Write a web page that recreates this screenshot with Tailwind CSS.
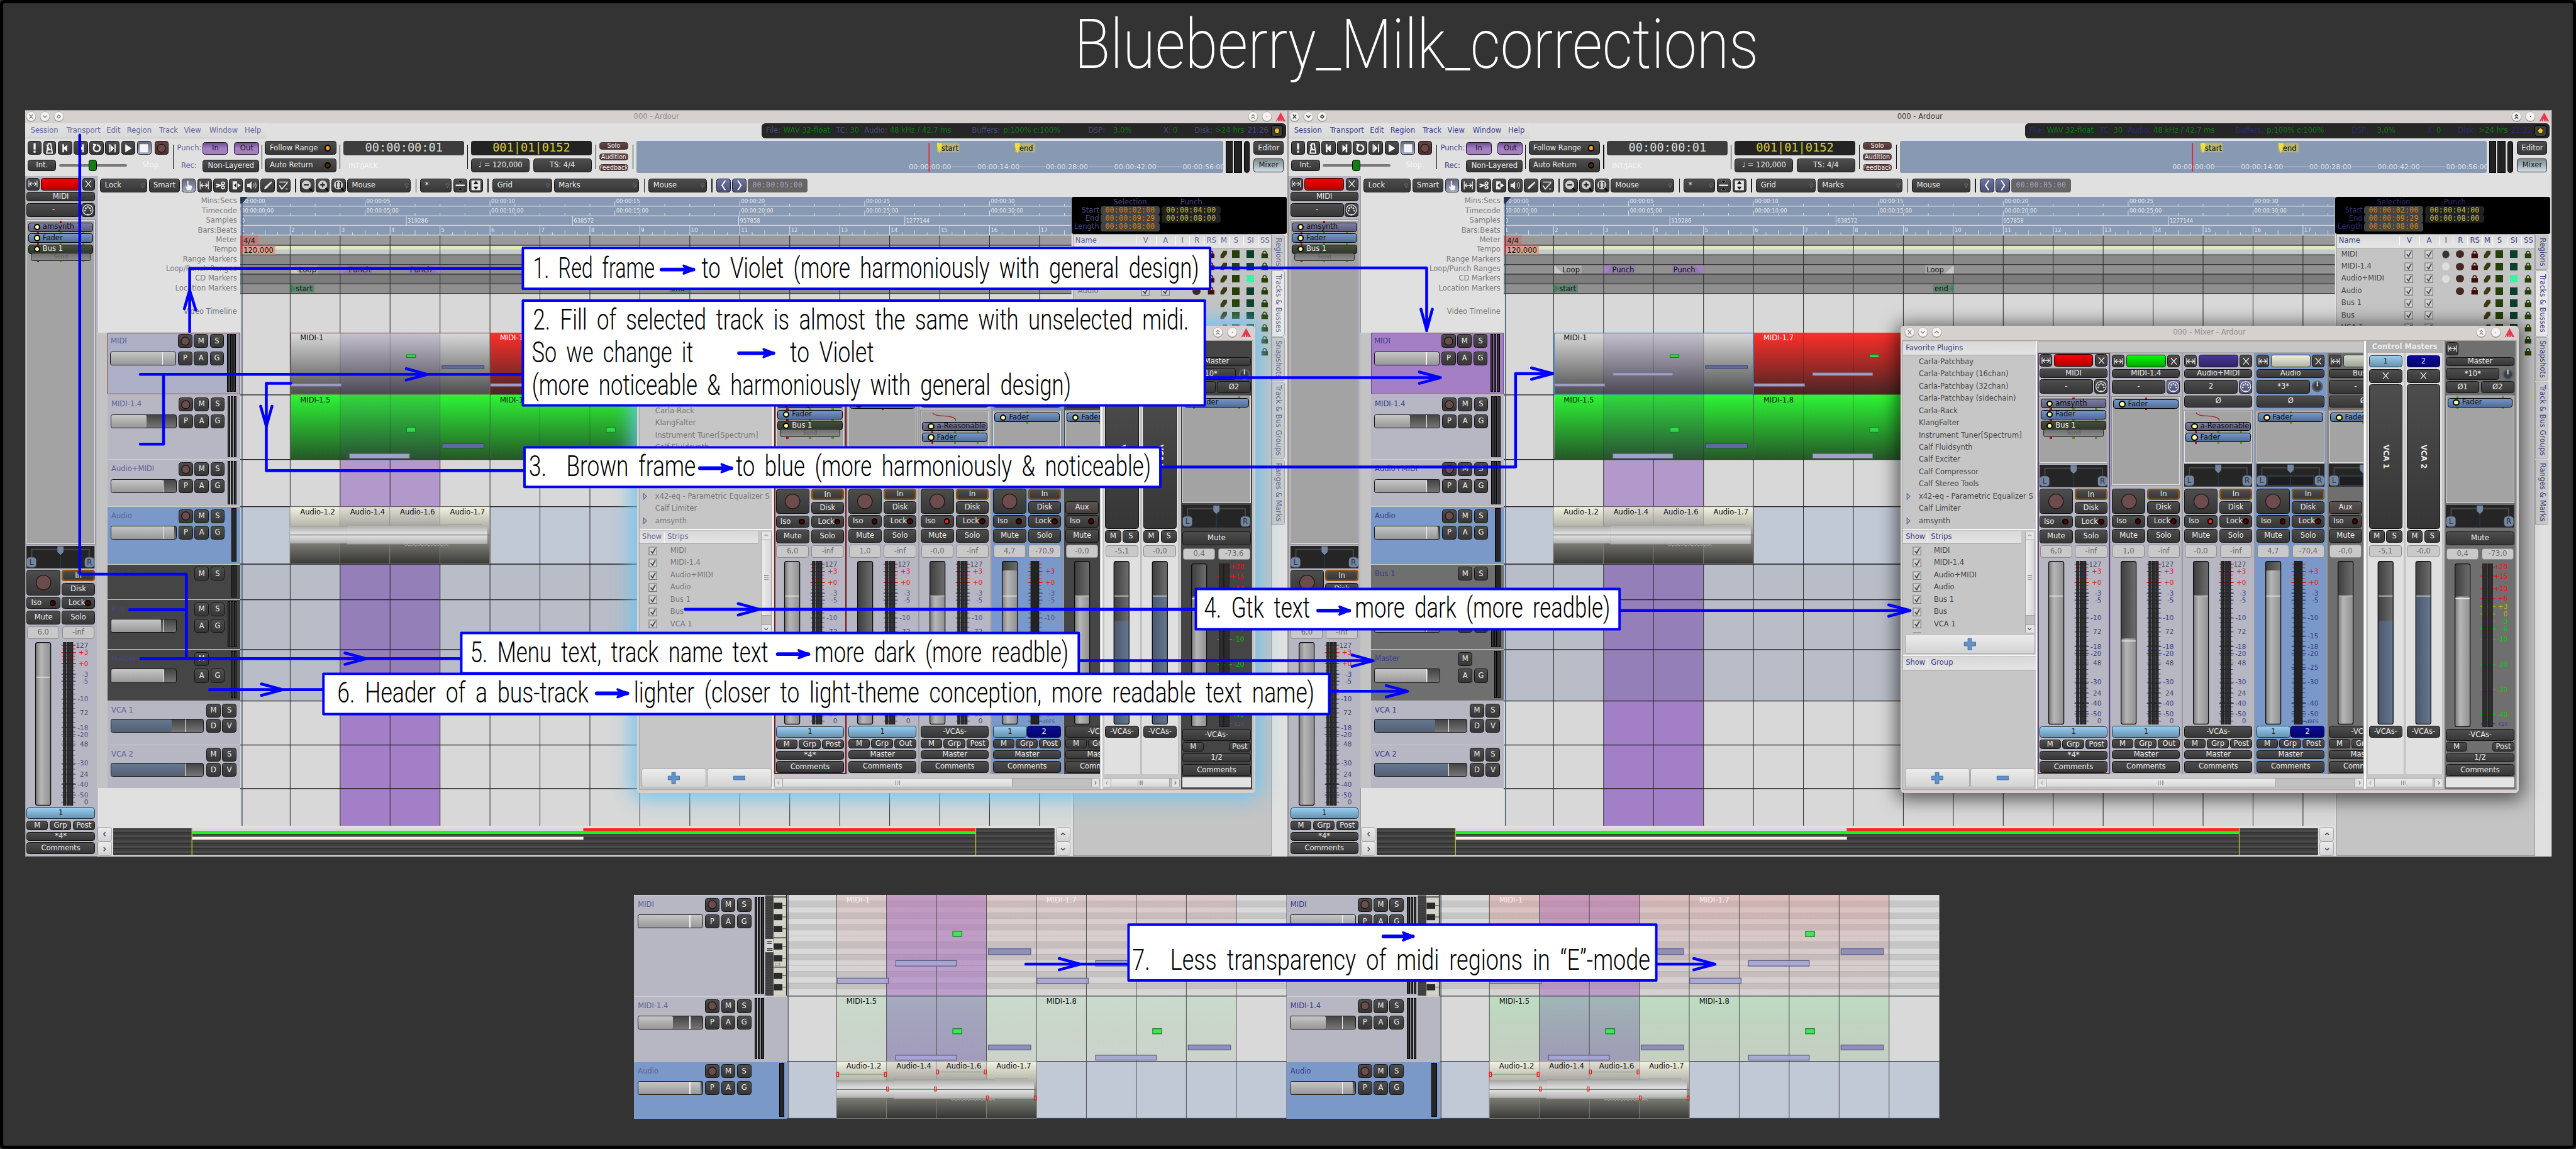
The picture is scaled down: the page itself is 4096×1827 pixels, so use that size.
<!DOCTYPE html>
<html lang="en">
<head>
<meta charset="utf-8">
<title>Blueberry_Milk_corrections</title>
<script src="https://cdn.jsdelivr.net/npm/@tailwindcss/browser@4"></script>
</head>
<body class="h-screen w-screen overflow-hidden bg-[#333333]">
<div id="root" class="relative h-[2817px] w-[6316px] overflow-hidden bg-[#333333] font-['DejaVu_Sans',sans-serif] text-[17.8px] leading-none whitespace-nowrap [zoom:0.64851]"></div>
<script>
// ---------- flow helpers: items are [start, end, html] along one axis ----------
const H = (o, items) => '<div class="flex h-full w-full">' + items.map(([a, b, h]) => {
  const m = a - o; o = b;
  return `<div class="flex shrink-0" style="margin-left:${m}px;width:${b - a}px">${h}</div>`;
}).join('') + '</div>';
const V = (o, items) => '<div class="flex h-full w-full flex-col">' + items.map(([a, b, h]) => {
  const m = a - o; o = b;
  return `<div class="flex shrink-0" style="margin-top:${m}px;height:${b - a}px">${h}</div>`;
}).join('') + '</div>';

const TONE = {
  dark: 'border-[#141414] bg-linear-to-b from-[#4d4d4d] to-[#363636] text-[#ececec]',
  purple: 'border-[#1c1526] bg-linear-to-b from-[#6b4f8a] via-[#a47fc6] to-[#a47fc6] text-[#141414]',
  lav: 'border-[#20222c] bg-linear-to-b from-[#64687c] to-[#a3a8c4] text-white',
  rec: 'border-[#151010] bg-linear-to-b from-[#664444] to-[#4c3030] text-white',
  brown: 'border-[#4c3535] bg-linear-to-b from-[#664848] to-[#4c3333] text-[#eeeeee] text-[15px]',
  mixer: 'border-[#222222] bg-linear-to-b from-[#7d8a90] to-[#cfdfe8] text-[#1a1a1a]',
  vca1: 'border-[#22333e] bg-linear-to-b from-[#97cef3] to-[#6891ae] text-[#1a1a1a]',
  navy: 'border-[#0a0a30] bg-linear-to-b from-[#0a0a9c] to-[#050568] text-[#e6e6e6]',
  input: 'border-[#7a4a08] bg-linear-to-b from-[#4d4d4d] to-[#363636] text-[#ececec] ring-2 ring-inset ring-[#9a5f08]',
  aux: 'border-[#141414] bg-linear-to-b from-[#5c5352] to-[#453f3e] text-[#ececec]',
  nudge: 'border-[#15151f] bg-linear-to-b from-[#6e74a2] to-[#4b4f72] text-white',
  red: 'border-[#200] bg-linear-to-b from-[#ff0000] to-[#b00000]',
  green: 'border-[#020] bg-linear-to-b from-[#00ff00] to-[#00a800]',
  violet: 'border-[#102] bg-linear-to-b from-[#4a3796] to-[#332568]',
  cream: 'border-[#333] bg-linear-to-b from-[#f0efe0] to-[#b4b3a4]',
  sage: 'border-[#333] bg-linear-to-b from-[#d3dccb] to-[#9da696]',
};
const btn = (l, t = 'dark', x = '') => `<div class="flex h-full w-full items-center justify-center overflow-hidden rounded-[7px] border-2 ${TONE[t]} ${x}">${l}</div>`;
const sep = '<div class="my-[9px] h-[60px] w-full bg-[#111111]"></div>';
const txt = (l, c) => `<div class="flex h-full w-full items-center ${c}">${l}</div>`;
const svg = (w, h, body, x = '') => `<svg class="shrink-0 ${x}" width="${w}" height="${h}" viewBox="0 0 ${w} ${h}">${body}</svg>`;
const ic = b => svg(30, 30, b);
const chev = (d, c = '#50526c', z = 16) => `<svg class="shrink-0" width="${z}" height="${z}" viewBox="0 0 16 16"><path d="${{ l: 'M10 3L6 8l4 5', r: 'M6 3l4 5-4 5', u: 'M3 10l5-4 5 4', d: 'M3 6l5 4 5-4' }[d]}" fill="none" stroke="${c}" stroke-width="2.600"/></svg>`;

const I = {
  panic: ic('<path d="M13 3h5v15h-5zM13 21h5v5h-5z" fill="#f4f4f4"/>'),
  metro: ic('<path d="M8 27 12 4h6l4 23zM11 19h9M15 19 8 6" fill="none" stroke="#f4f4f4" stroke-width="3"/>'),
  start: ic('<path d="M8 5h4v8l8-7v18l-8-7v8H8z" fill="#f4f4f4"/>'),
  end: ic('<path d="M22 5h-4v8l-8-7v18l8-7v8h4z" fill="#f4f4f4"/>'),
  loop: ic('<path d="M10 9a8 8 0 1 0 6-2" fill="none" stroke="#f4f4f4" stroke-width="4"/><path d="M5 4l10 1-5 9z" fill="#f4f4f4"/>'),
  range: ic('<path d="M7 5h3v20H7zM20 5h3v20h-3zM11 6l8 9-8 9z" fill="#f4f4f4"/>'),
  play: ic('<path d="M8 5l16 10L8 25z" fill="#f4f4f4"/>'),
  stop: ic('<path d="M5 5h20v20H5z" fill="#f4f4f4"/>'),
  rec: ic('<circle cx="15" cy="15" r="10" fill="#704a4a" stroke="#241616" stroke-width="2"/>'),
  hand: ic('<path d="M12 4h3v10l8 2v6l-2 5h-8l-6-8 2-2 3 3z" fill="#f4f4f4"/>'),
  span: ic('<path d="M5 5v20M25 5v20M7 15h16M12 10l-5 5 5 5M18 10l5 5-5 5" fill="none" stroke="#e8e8e8" stroke-width="2"/>'),
  cut: ic('<path d="M4 12l13 4M4 19l13-5" stroke="#f4f4f4" stroke-width="3"/><circle cx="21" cy="10" r="3.500" fill="none" stroke="#f4f4f4" stroke-width="2.500"/><circle cx="21" cy="20" r="3.500" fill="none" stroke="#f4f4f4" stroke-width="2.500"/>'),
  stretch: ic('<path d="M6 5h11v20H6z" fill="#e8e8e8"/><path d="M15 10l-6 5 6 5z" fill="#222"/><path d="M18 10l8 5-8 5z" fill="#f4f4f4"/>'),
  audition: ic('<path d="M3 11h5l6-6v20l-6-6H3z" fill="#e8e8e8"/><path d="M18 10q4 5 0 10M22 7q6 8 0 16" fill="none" stroke="#bbb" stroke-width="2"/>'),
  draw: ic('<path d="M6 25l2-6L24 5l1 4L11 23z" fill="#e8e8e8"/>'),
  edit: ic('<path d="M5 7h20M5 15l6 9L25 8M20 24h5" fill="none" stroke="#e8e8e8" stroke-width="2.500"/>'),
  zout: ic('<circle cx="14" cy="14" r="11" fill="#cfcfcf"/><path d="M8 14h12" stroke="#222" stroke-width="3"/><path d="M21 22l6 6" stroke="#000" stroke-width="4"/>'),
  zin: ic('<circle cx="14" cy="14" r="11" fill="#cfcfcf"/><path d="M8 14h12M14 8v12" stroke="#222" stroke-width="3"/><path d="M21 22l6 6" stroke="#000" stroke-width="4"/>'),
  zfit: ic('<circle cx="14" cy="14" r="11" fill="#cfcfcf"/><path d="M12 8H9v12h3M16 8h3v12h-3" fill="none" stroke="#222" stroke-width="2.500"/><path d="M21 22l6 6" stroke="#000" stroke-width="4"/>'),
  shrink: ic('<path d="M9 3h12l-6 8zM9 27h12l-6-8z" fill="#0c0c0c" stroke="#999" stroke-width="1"/><path d="M4 13h22v4H4z" fill="#e8e8e8"/>'),
  expand: ic('<path d="M4 3h22v24H4z" fill="#e8e8e8"/><path d="M9 12h12l-6-8zM9 18h12l-6 8z" fill="#111"/>'),
  lt: ic('<path d="M19 3l-8 12 8 12" fill="none" stroke="#fff" stroke-width="3"/>'),
  gt: ic('<path d="M11 3l8 12-8 12" fill="none" stroke="#fff" stroke-width="3"/>'),
  width: svg(26, 26, '<path d="M3 5v16M23 5v16M5 13h16M10 8l-5 5 5 5M16 8l5 5-5 5" fill="none" stroke="#e8e8e8" stroke-width="1.800"/>'),
  x: svg(26, 26, '<path d="M6 5l14 16M20 5L6 21" stroke="#e8e8e8" stroke-width="2"/>'),
  din: svg(30, 30, '<circle cx="15" cy="15" r="12.500" fill="none" stroke="#e8e8e8" stroke-width="2"/><g fill="#e8e8e8"><circle cx="8" cy="17" r="2"/><circle cx="10" cy="11" r="2"/><circle cx="15" cy="8" r="2"/><circle cx="20" cy="11" r="2"/><circle cx="22" cy="17" r="2"/><path d="M12 25h6v3h-6z"/></g>'),
};
const peak = '<path d="M13 1L1 23h3l2-5 1 5h3l1-7 2 7h3l1-5 2 5h6z" fill="#e8384f"/>';
const bub = (g, c) => svg(26, 26, `<circle cx="13" cy="14" r="12" fill="#8d8986"/><circle cx="13" cy="12.500" r="11.500" fill="#f4f3f1" stroke="#a9a5a2"/><path d="${g}" fill="none" stroke="${c}" stroke-width="2.200"/>`);
const G = { x: 'M9 8l8 10M17 8L9 18', v: 'M8 10l5 5 5-5', o: 'M13 9l4 4-4 4-4-4z', u: 'M8 15l5-5 5 5', uu: 'M9 12l4-4 4 4M9 18l4-4 4 4', d: 'M12 13h2' };

const T = [
  { menu: 'text-[#63669c]', glyph: '#8a8785', title: 'text-[#918e8c]', name: 'text-[#5d6396]', bus: 'bg-[#454545]', busName: 'text-[#46487a]',
    gtk: 'text-[#787878]', sel: 'bg-[#adafc6] border-[#7b1c1c]', msel: 'border-[#7b1c1c]', stat: 'text-[#484b7d]', selStroke: '#8a6a6a', scale: '#4f5488',
    glow: 'shadow-[0_0_50px_12px_rgba(105,195,240,0.95)]', clock: '21:26', tab: 'text-[#5d6396]', db: '-70,9', mdb: '-73,6' },
  { menu: 'text-[#3b4187]', glyph: '#2e2e2e', title: 'text-[#3a3836]', name: 'text-[#363c88]', bus: 'bg-[#6f6f6f]', busName: 'text-[#363c88]',
    gtk: 'text-[#474747]', sel: 'bg-[#a47fc6] border-[#694a92]', msel: 'border-[#5f4585]', stat: 'text-[#2a2f6e]', selStroke: '#3a8ee0', scale: '#363c88',
    glow: 'shadow-[0_6px_44px_8px_rgba(0,0,0,0.6)]', clock: '21:22', tab: 'text-[#363c88]', db: '-70,4', mdb: '-73,0' },
];

// ---------- mixer strips ----------
const led = '<span class="ml-[12px] mr-[6px] h-[16px] w-[16px] shrink-0 rounded-full border-4 border-black bg-[#f3ffa0]"></span>';
const PROC = {
  plug: 'bg-linear-to-b from-[#7d7ea3] to-[#5c5d78] text-[#0d0d0d]',
  fader: 'bg-linear-to-b from-[#7597c8] to-[#516d97] text-[#0d0d0d]',
  send: 'bg-linear-to-b from-[#454f3c] to-[#30372a] text-[#eeeeee]',
};
const proc = ([n, k]) => `<div class="flex h-[23px] shrink-0 items-center overflow-hidden rounded-[7px] border-2 border-black ${PROC[k]}">${led}${n}</div>`;
const sendBar = '<div class="mx-[6px] -mt-[3px] flex h-[20px] shrink-0 items-center justify-center rounded-[5px] border-2 border-[#222] bg-linear-to-b from-[#6e6e6e] to-[#8d8d8d] text-[14px] text-[#5a5a5a]">Send</div>';
const tick = c => `<span class="w-[5px] ${c}"></span>`;
const ticks = k => `<div class="flex h-[4px] shrink-0 justify-between px-[22px]">${k === 'all' ? tick('bg-[#b01010]') + tick('bg-[#4e9a06]') + tick('bg-[#4e9a06]') : k === 'mid' ? tick('') + tick('bg-[#4e9a06]') + tick('') : k === 'midr' ? tick('') + tick('bg-[#b01010]') + tick('') : k === 'two' ? tick('bg-[#4e9a06]') + tick('bg-[#4e9a06]') : ''}</div>`;
const panner = b => svg(167, 55, `<path d="M0 0h167v55H0z" fill="#252525"/><path d="M13 30V9h141v21" fill="none" stroke="#484848" stroke-width="3"/>${b ? '<path d="M26 29h115v24H26z" fill="#1e1e1e" stroke="#3d4c63" stroke-width="2"/>' : ''}<path d="M83.500 10v45" stroke="#2b3a4e" stroke-width="2"/><path d="M76 1h15v14l-7.500 7-7.500-7z" fill="#73859f"/><rect x="1" y="28" width="23" height="25" rx="7" fill="#73859f"/><rect x="143" y="28" width="23" height="25" rx="7" fill="#73859f"/><text x="12.500" y="47" font-size="18" text-anchor="middle" fill="#2a3340">L</text><text x="154.500" y="47" font-size="18" text-anchor="middle" fill="#2a3340">R</text>`);

const MIDI = [['127', 8, 'k'], ['+3', 26, 'r'], ['+0', 53, 'r'], ['-3', 79, 'b'], ['-5', 96, 'b'], ['-10', 140, 'b'], ['72', 174, 'k'], ['-18', 210, 'b'], ['-20', 227, 'b'], ['48', 250, 'k'], ['-30', 297, 'b'], ['24', 325, 'k'], ['-40', 349, 'b'], ['-50', 375, 'b'], ['0', 393, 'k']];
const AUDIO = [['+3', 26, 'r'], ['+0', 53, 'r'], ['-3', 79, 'b'], ['-5', 96, 'b'], ['-10', 140, 'b'], ['-15', 184, 'b'], ['-18', 210, 'b'], ['-20', 227, 'b'], ['-25', 262, 'b'], ['-30', 297, 'b'], ['-40', 349, 'b'], ['-50', 375, 'b'], ['dBFS', 393, 's']];
const K20 = [['+20', 9, 'r'], ['+15', 31, 'r'], ['+10', 62, 'r'], ['+6', 86, 'r'], ['+3', 105, 'y'], ['0', 124, 'y'], ['-3', 142, 'g'], ['-6', 160, 'g'], ['-10', 186, 'g'], ['-20', 248, 'g'], ['-30', 309, 'g'], ['-40', 370, 'g'], ['K20', 393, 's']];
const GRADS = '<defs><linearGradient id="fg"><stop offset="0" stop-color="#7c7c7c"/><stop offset=".35" stop-color="#b6b6b6"/><stop offset="1" stop-color="#8f8f8f"/></linearGradient><linearGradient id="fb"><stop offset="0" stop-color="#3e3e3e"/><stop offset="1" stop-color="#6e6e6e"/></linearGradient><linearGradient id="fv"><stop offset="0" stop-color="#4a586c"/><stop offset="1" stop-color="#66788f"/></linearGradient></defs>';
const faderBody = (x, fill, line, g) => `<rect x="${x}" y="1" width="37" height="399" rx="5" fill="url(#fb)"/><rect x="${x}" y="${fill + 1}" width="37" height="${399 - fill}" rx="5" fill="url(#${g})"/><path d="M${x} ${line}h37" stroke="#f2f2f2" stroke-width="2"/><rect x="${x}" y="1" width="37" height="399" rx="5" fill="none" stroke="#0c0c0c" stroke-width="2"/>`;
const meterBody = (x, n) => n === 1 ? `<path d="M${x} 0h20v401H${x}z" fill="#232323" stroke="#111"/>` : Array.from({ length: n }, (_, i) => `<rect x="${x + i * (n === 2 ? 13 : 8.500)}" y="0" width="${n === 2 ? 11 : 6.500}" height="401" fill="#2c2c2c" stroke="#0a0a0a"/>`).join('');
const scaleBody = (t, scale) => {
  const C = { r: '#ee1111', b: t.scale, k: '#444a66', g: '#00d200', y: '#c4b400', s: t.scale };
  let s = '';
  for (let y = 8; y < 395; y += scale === K20 ? 1000 : y < 100 ? 8.800 : 11.500) s += `<path d="M86 ${y}h32" stroke="${y < 60 ? C.r : C.b}" stroke-width="1.500"/>`;
  scale.forEach(([l, y, c]) => { s += `<path d="M84 ${y}h36" stroke="${C[c]}" stroke-width="${c === 'k' ? 1 : 2}"/><text x="150" y="${y + 5.500}" font-size="${c === 's' ? 12 : 16}" text-anchor="end" fill="${C[c]}">${l}</text>`; });
  return s;
};
const faderSec = (t, s) => svg(167, 401, GRADS + faderBody(21, s.fill, s.line, 'fg') + scaleBody(t, s.scale) + meterBody(s.meters === 1 ? 91 : 89, s.meters), 'ml-px');

const gainBox = v => `<div class="flex h-full w-full items-center justify-center rounded-[6px] border-2 border-[#8c8c8c] bg-[#c9c9c9] text-[#6b6b6b]">${v}</div>`;
const dot = on => `<span class="h-[15px] w-[15px] rounded-full border-4 border-black ${on ? 'bg-[#ff2020]' : 'bg-[#5a0000]'}"></span>`;
const knob = svg(30, 32, '<circle cx="15" cy="16" r="14" fill="#5a6068"/><circle cx="15" cy="16" r="10" fill="#3a3f47"/><path d="M15 16V4" stroke="#ddd" stroke-width="3"/>');
const row = (h, mt, items) => `<div class="shrink-0" style="height:${h}px;margin-top:${mt}px">${H(0, items)}</div>`;

function strip(t, s) {
  const B = s.bg;
  return `<div class="flex h-full w-[177.300px] shrink-0 flex-col ${B} ${s.sel ? 'border-4 ' + t.msel : 'border-r-2 border-l-2 border-[#9a9a9a]'}"><div class="flex h-full w-[167px] flex-col ${s.sel ? 'ml-px' : 'ml-[3px] pt-[4px] pb-[4px]'}">`
    + row(31, 0, [[0, 31, btn(I.width)], [35, 132, btn('', s.color)], [136, 167, btn(I.x)]])
    + row(22.500, 4, [[0, 167, btn(s.name)]])
    + row(34, 4.500, [[0, 131, btn(s.input)], [134, 167, s.knob ? knob : btn(I.din, s.din || 'dark')]])
    + (s.phase ? row(29, 4, [[0, 167, btn('Ø')]]) : '')
    + `<div class="mt-[8px] flex min-h-0 flex-1 flex-col border-2 border-[#e2e2e2] bg-[#a3a3a3] px-[2px] outline outline-[#8a8a8a]">${s.route ? svg(160, 26, '<path d="M26 3c3 14 56 2 57 20" fill="none" stroke="#aa2222" stroke-width="2"/>') : ''}${s.procs.map((p, i) => (i ? ticks(s.tk) : `<div class="${s.route ? 'hidden' : ''}">${ticks(s.t0 || s.tk)}</div>`) + proc(p)).join('')}${s.send ? sendBar : ''}${ticks(s.tk)}</div>`
    + (s.nopan ? '<div class="h-[8px] shrink-0"></div>' : `<div class="mt-[4px] h-[55px] shrink-0">${panner(s.box)}</div><div class="h-[4px] shrink-0"></div>`)
    + row(62, 0, [[0, 82, s.aux ? V(0, [[32, 62, btn('Aux', 'aux')]]) : btn(svg(50, 50, '<circle cx="25" cy="25" r="18" fill="#6c4c4c" stroke="#241616" stroke-width="2"/>'))], [86, 167, s.aux ? '' : V(0, [[0, 28, btn('In', 'input')], [32, 62, btn('Disk')]])]])
    + row(29.500, 4, [[0, 82, btn(`Iso <span class="w-[20px]"></span>${dot(s.iso)}`)], [86, 167, btn(`<span class="pl-[8px]">Lock</span>${dot()}`)]])
    + row(34, 4, [[0, 82, btn('Mute')], [86, 167, btn('Solo')]])
    + row(31, 5, [[1, 80, gainBox(s.gain[0])], [87, 166, gainBox(s.gain[1])]])
    + `<div class="mt-[8px] h-[401px] shrink-0">${faderSec(t, s)}</div>`
    + row(28.500, 4, s.vca === 2 ? [[0, 83, btn('1', 'vca1')], [83, 167, btn('2', 'navy')]] : [[0, 167, btn(s.vca === 1 ? '1' : '-VCAs-', s.vca === 1 ? 'vca1' : 'dark')]])
    + row(23, 4, [[0, 52, btn('M')], [56, 109, btn('Grp')], [113, 167, btn(s.post || 'Post')]])
    + row(22, 4, [[0, 167, btn(s.out)]])
    + row(29, 4, [[0, 167, btn('Comments')]])
    + '</div></div>';
}
const LAV = 'bg-[#b7b6c3]';
const midiStrip = { bg: LAV, color: 'red', name: 'MIDI', input: '-', tk: 'all', t0: 'midr', procs: [['amsynth', 'plug'], ['Fader', 'fader'], ['Bus 1', 'send']], send: 1, gain: ['6,0', '-inf'], fill: 0, line: 86, vca: 1, out: '*4*', scale: MIDI, meters: 3 };

function masterStrip(t) {
  return `<div class="ml-[4px] flex h-full w-[173px] shrink-0 flex-col ${t.bus} pl-[3px]">`
    + row(31, 4, [[0, 31, btn(I.width)]])
    + row(22.500, 5, [[0, 167, btn('Master')]])
    + row(29, 4, [[0, 131, btn('*10*')], [136, 167, knob]])
    + row(29, 4, [[0, 81, btn('Ø1')], [85, 167, btn('Ø2')]])
    + `<div class="mt-[6px] flex w-[167px] min-h-0 flex-1 flex-col border-2 border-[#e2e2e2] bg-[#a3a3a3] px-[2px]">${ticks('two')}${proc(['Fader', 'fader'])}${ticks('two')}</div>`
    + `<div class="mt-[5px] h-[55px] shrink-0">${panner(0)}</div>`
    + row(34, 10, [[0, 167, btn('Mute')]])
    + row(29, 7, [[1, 80, gainBox('0,4')], [87, 166, gainBox(t.mdb)]])
    + `<div class="mt-[9px] h-[401px] shrink-0">${faderSec(t, { fill: 80, line: 86, scale: K20, meters: 2 })}</div>`
    + row(29, 4, [[0, 167, btn('-VCAs-')]])
    + row(23, 4, [[0, 52, btn('M')], [114, 167, btn('Post')]])
    + row(22.500, 4, [[0, 167, btn('1/2')]])
    + row(29, 4, [[0, 167, btn('Comments')]])
    + '<div class="mt-[4px] mb-[5px] h-[24px] w-[167px] shrink-0 bg-[#e3e3e3]"></div></div>';
}
function vcaStrip(n, fill, gain) {
  return `<div class="flex h-full w-[92px] shrink-0 flex-col border-x-2 border-[#bdbdbd] bg-[#e0e0e0] px-[3px]">`
    + row(29, 6, [[0, 82, btn(n, n === 1 ? 'vca1' : 'navy')]])
    + row(34, 4, [[0, 82, btn(I.x)]])
    + row(354, 4, [[0, 82, btn(`<span class="font-bold [writing-mode:vertical-rl]">VCA ${n}</span>`)]])
    + row(29.500, 4, [[0, 39, btn('M')], [43, 82, btn('S')]])
    + row(30, 7, [[1, 81, gainBox(gain)]])
    + `<div class="mt-[8px] h-[401px] shrink-0">${svg(82, 401, faderBody(22, fill, 86, 'fv'))}</div>`
    + row(29, 4, [[0, 82, btn('-VCAs-')]])
    + '</div>';
}
const chk = '<svg class="shrink-0" width="22" height="22" viewBox="0 0 22 22"><path d="M1.500 1.500h19v19h-19z" fill="#d2d2d2" stroke="#7a7a7a" stroke-width="1.800"/><path d="M6 11l4.500 5.500L17 4" fill="none" stroke="#444" stroke-width="2.800"/></svg>';
const plus = svg(32, 32, '<path d="M11 2h9v9h10v9H20v10h-9V20H2v-9h9z" fill="#6493c8" stroke="#3f6ea6" stroke-width="1.500"/>');
const minus = svg(32, 32, '<path d="M2 11h28v9H2z" fill="#6493c8" stroke="#3f6ea6" stroke-width="1.500"/>');
const gbtn = (l, x = '') => `<div class="flex h-full w-full items-center justify-center rounded-[5px] border-2 border-[#a8a8a8] bg-linear-to-b from-[#ececec] to-[#d3d3d3] ${x}">${l}</div>`;
const head = (l, t) => `<div class="flex h-full w-full items-center border-b-2 border-[#a0a0a0] bg-linear-to-b from-[#d8d8d8] to-[#e4e4e4] pl-[6px] ${t.menu}">${l}</div>`;

function mixer(t, idx) {
  const fav = ['Carla-Patchbay', 'Carla-Patchbay (16chan)', 'Carla-Patchbay (32chan)', 'Carla-Patchbay (sidechain)', 'Carla-Rack', 'KlangFalter', 'Instrument Tuner[Spectrum]', 'Calf Fluidsynth', 'Calf Exciter', 'Calf Compressor', 'Calf Stereo Tools', '>x42-eq - Parametric Equalizer S', 'Calf Limiter', '>amsynth'];
  const tri = `<svg class="absolute left-[8px]" width="12" height="16" viewBox="0 0 12 16"><path d="M2 1l7 7-7 7z" fill="none" stroke="#63669c" stroke-width="2"/></svg>`;
  const left = V(566, [
    [568, 601, head('Favorite Plugins', t)],
    [603, 1025, `<div class="w-full overflow-hidden ${t.gtk}">${fav.map(f => `<div class="relative flex h-[30px] items-center pl-[38px]">${f[0] === '>' ? tri + f.slice(1) : f}</div>`).join('')}</div>`],
    [1028, 1031, '<div class="w-full bg-[#f5f5f5]"></div>'],
    [1032, 1284, H(0, [
      [0, 290, V(0, [[0, 33, head('Show <span class="mx-[6px] h-[26px] w-[2px] bg-white"></span>Strips', t)], [34, 252, `<div class="w-full overflow-hidden ${t.gtk}">${['MIDI', 'MIDI-1.4', 'Audio+MIDI', 'Audio', 'Bus 1', 'Bus', 'VCA 1', ''].map(f => `<div class="flex h-[30px] items-center gap-[31px] pl-[22px]">${chk}${f}</div>`).join('')}</div>`]])],
      [298, 323, `<div class="flex w-full flex-col rounded-[4px] border-2 border-[#a3a3a3] bg-[#bfbfbf]"><div class="flex h-[20px] items-center justify-center bg-[#e4e4e4]">${chev('u', '#a0a0a0', 13)}</div><div class="flex h-[186px] flex-col items-center justify-center gap-[3px] border-y-2 border-[#a3a3a3] bg-linear-to-r from-[#eeeeee] to-[#d6d6d6]"><span class="h-[2px] w-[11px] bg-[#9a9a9a]"></span><span class="h-[2px] w-[11px] bg-[#9a9a9a]"></span><span class="h-[2px] w-[11px] bg-[#9a9a9a]"></span></div><div class="mt-auto flex h-[20px] items-center justify-center border-t-2 border-[#a3a3a3] bg-[#e4e4e4]">${chev('d', '#5d5f86', 13)}</div></div>`]])],
    [1285, 1334, H(0, [[4, 323, gbtn(plus)]])],
    [1336, 1339, '<div class="w-full bg-[#f5f5f5]"></div>'],
    [1340, 1374, head('Show <span class="mx-[6px] h-[26px] w-[2px] bg-white"></span>Group', t)],
    [1615, 1661, H(0, [[4, 163, gbtn(plus)], [164, 323, gbtn(minus)]])],
  ]);
  const strips = [
    { ...midiStrip, sel: 1 },
    { bg: LAV, color: 'green', name: 'MIDI-1.4', input: '-', din: 'nudge', tk: 'midr', procs: [['Fader', 'fader']], nopan: 1, gain: ['1,0', '-inf'], fill: 189, line: 196, vca: 1, post: 'Out', out: 'Master', scale: MIDI, meters: 3 },
    { bg: LAV, color: 'violet', name: 'Audio+MIDI', input: '2', din: 'nudge', phase: 1, route: 1, tk: 'all', procs: [['a-Reasonable', 'plug'], ['Fader', 'fader']], iso: 1, gain: ['-0,0', '-inf'], fill: 86, line: 86, out: 'Master', scale: MIDI, meters: 3 },
    { bg: 'bg-[#7a98c8]', color: 'cream', name: 'Audio', input: '*3*', knob: 1, phase: 1, tk: 'mid', procs: [['Fader', 'fader']], box: 1, gain: ['4,7', t.db], fill: 22, line: 86, vca: 2, out: 'Master', scale: AUDIO, meters: 1 },
    { bg: t.bus, color: 'sage', name: 'Bus 1', input: '-', knob: 1, phase: 1, tk: 'mid', procs: [['Fader', 'fader']], box: 1, aux: 1, gain: ['-0,0', '-inf'], fill: 86, line: 86, out: 'Master', scale: AUDIO, meters: 1 },
  ];
  const grip = '<span class="h-[11px] w-[2px] bg-[#9a9a9a]"></span>';
  const sb = (w, th) => `<div class="flex h-full w-full rounded-[4px] border-2 border-[#a3a3a3] bg-[#c0c0c0]"><div class="flex w-[18px] items-center justify-center bg-[#e4e4e4]">${chev('l', '#a0a0a0', 12)}</div><div class="flex items-center justify-center gap-[3px] border-x-2 border-[#a3a3a3] bg-linear-to-b from-[#eeeeee] to-[#d6d6d6]" style="width:${th}px">${grip}${grip}${grip}</div><div class="ml-auto flex w-[20px] items-center justify-center border-l-2 border-[#a3a3a3] bg-[#e4e4e4]">${chev('r', '#6a6c90', 12)}</div></div>`;
  return `<section class="absolute top-[528px] left-[1501px] flex h-[1146px] w-[1516px] flex-col rounded-[9px] bg-[#d6d1ce] ${t.glow}">
    <header class="h-[36px] shrink-0">${H(0, [[9, 35, V(0, [[4, 30, bub(G.x, '#8a8785')]])], [42, 68, V(0, [[4, 30, bub(G.v, '#8a8785')]])], [75, 101, V(0, [[4, 30, bub(G.u, '#8a8785')]])], [600, 914, txt('000 - Mixer - Ardour', 'justify-center text-[#918e8c]')], [1411, 1437, V(0, [[4, 30, bub(G.uu, '#8a8785')]])], [1446, 1472, V(0, [[4, 30, bub(G.d, '#8a8785')]])], [1480, 1507, V(0, [[5, 30, svg(27, 25, peak)]])]])}</header>
    <div class="mx-[5px] mb-[7px] min-h-0 flex-1 overflow-hidden border-2 border-[#a5a5a5] bg-[#c6c6c6]">${H(1508, [
      [1508, 1833, left],
      [1833, 1836, '<div class="h-full w-full bg-[#f8f8f8]"></div>'],
      [1838, 2637, `<div class="flex h-full w-full flex-col overflow-hidden"><div class="h-[30px] shrink-0 border border-[#aaa]"></div><div class="flex h-[1033px] shrink-0">${strips.map(s => strip(t, s)).join('')}</div><div class="mt-[9px] h-[23px] shrink-0">${sb(799, 564)}</div></div>`],
      [2638, 2642, '<div class="h-full w-full bg-[#f8f8f8]"></div>'],
      [2643, 2832, `<div class="flex h-full w-full flex-col"><div class="flex h-[30px] shrink-0 items-center justify-center bg-[#b2b2b2] font-bold text-[#ececec]">Control Masters</div><div class="flex h-[1033px] shrink-0 gap-px pl-[2px]">${vcaStrip(1, 146, '-5,1')}${vcaStrip(2, 86, '-0,0')}</div><div class="mt-[9px] h-[23px] shrink-0">${sb(189, 145)}</div></div>`],
      [2832, 3009, masterStrip(t)],
    ])}</div>
  </section>`;
}

// ---------- track headers ----------
const mini = l => btn(l);
const recDot = svg(26, 26, '<circle cx="13" cy="13" r="10" fill="#6c4c4c" stroke="#1c1212" stroke-width="2"/>');
const slider = (fill, line, w, k) => `<div class="relative h-full w-full overflow-hidden rounded-[5px] border-2 border-[#151515] bg-linear-to-b from-[#444444] to-[#757575]"><div class="h-full rounded-r-[3px] ${k ? 'bg-linear-to-b from-[#66788f] to-[#536075]' : 'bg-linear-to-b from-[#c6c6c6] to-[#979797]'}" style="width:${fill}px"></div><div class="absolute top-0 h-full w-[2px] bg-[#f4f4f4]" style="left:${line}px"></div></div>`;
const meters = n => `<div class="flex h-full w-full justify-end gap-px">${(n === 1 ? '<div class="w-[13px] border border-black bg-[#262626]"></div>' : '<div class="w-[7px] border border-black bg-[#343434]"></div>'.repeat(n))}</div>`;
function track(t, k) {
  const bus = k.kind === 'bus', vca = k.kind === 'vca', w = k.w || 324.500;
  const y = k.sel ? 6 : 8;
  const r1 = vca ? [[242, 277, mini('M')], [281, 316, mini('S')]] : [...(bus ? [] : [[174, 209, mini(recDot)]]), [213, 248, mini('M')], ...(k.noS ? [] : [[252, 287, mini('S')]])];
  const r2 = k.short ? [] : vca ? [[8, 236, slider(k.fill, 180, 228, 1)], [242, 277, mini('D')], [281, 316, mini('V')]] : [[8, 169, slider(k.fill, 126, 161)], ...(bus ? [] : [[174, 209, mini('P')]]), [213, 248, mini('A')], [252, 287, mini('G')]];
  const bg = k.sel ? t.sel + ' border-[3px]' : bus ? t.bus : k.kind === 'audio' ? 'bg-[#7a98c8]' : LAV;
  const off = k.sel ? 3 : 0, edge = k.sel ? 3 : 2, mx = k.mx || w - 8;
  const g = vca ? 46 : 49 - (k.sel ? 1 : 0);
  const left = V(edge, [[y, y + 34, H(off, [[9, 170, txt(k.name, bus ? t.busName : t.name)], ...r1])], [g, g + 34, H(off, r2)]]);
  return `<div class="flex shrink-0 ${bg} ${k.sel ? '' : 'border-t-2 border-[#cfcfcf]'}" style="height:${k.h}px;width:${w}px">${H(off, [[off, vca ? 320 : 290, left], ...(vca ? [] : [[291, mx, `<div class="w-full pt-[3px] pb-[5px]">${meters(k.m)}</div>`]])])}</div>`;
}
const TRACKS = [
  { name: 'MIDI', h: 152, sel: 1, fill: 161, m: 3 }, { name: 'MIDI-1.4', h: 159, fill: 86, m: 3 }, { name: 'Audio+MIDI', h: 115, fill: 126, m: 3 },
  { name: 'Audio', h: 141.500, kind: 'audio', fill: 153, m: 1 }, { name: 'Bus 1', h: 87, kind: 'bus', short: 1, m: 1 }, { name: 'Bus', h: 122, kind: 'bus', fill: 121, m: 3 },
  { name: 'Master', h: 126, kind: 'bus', noS: 1, fill: 129, m: 2 }, { name: 'VCA 1', h: 108, kind: 'vca', fill: 148 }, { name: 'VCA 2', h: 107, kind: 'vca', fill: 180 },
];

// ---------- editor canvas (window-local coordinates) ----------
const bar = n => 526.900 + (n - 1) * 122.550;
const grad = (id, a, b) => `<linearGradient id="${id}" x1="0" y1="0" x2="0" y2="1"><stop offset="0" stop-color="${a}"/><stop offset="1" stop-color="${b}"/></linearGradient>`;
const rc = (x, y, x2, y2, f, e = '') => `<rect x="${x}" y="${y}" width="${x2 - x}" height="${y2 - y}" fill="${f}" ${e}/>`;
const note = (x, y, x2, y2, c) => rc(x, y, x2, y2, { l: '#a3a2c4', b: '#5f6b9c', g: '#2fd848' }[c], `stroke="${{ l: '#6f6f98', b: '#39406c', g: '#0f7f22' }[c]}" stroke-width="1.500"`);
function waves(x0, y0, y1, mid) {
  let s = '';
  for (let i = 0; i < 4; i++) s += rc(x0 + i * 122.500, y0, x0 + (i + 1) * 122.500, y1, i % 3 ? 'url(#aud2)' : 'url(#aud)', 'stroke="#8a8a82" stroke-width="1"');
  s += rc(x0, mid - 21, x0 + 140, mid + 20, 'url(#wav)') + rc(x0 + 140, mid - 23, x0 + 484, mid + 22, 'url(#wav)');
  let z = `M${x0 + 280} ${mid + 23}`, q = `M${x0 + 280} ${mid - 24}`;
  for (let x = x0 + 284, i = 0; x < x0 + 392; x += 4, i++) { z += `L${x} ${mid + 23 + [3, 0, 4, 1][i % 4]}`; q += `L${x} ${mid - 23 - [2, 0, 3, 1][i % 4]}`; }
  s += `<path d="${z}M${x0} ${mid + 20}H${x0 + 140}v2H${x0 + 280}M${x0} ${mid - 21}H${x0 + 140}v-3H${x0 + 280}${q}H${x0 + 470}" fill="none" stroke="#a2a29e" stroke-width="2"/><path d="M${x0} ${mid}h490" stroke="#6a6a6a" stroke-width="2"/>`;
  return s;
}
function canvas(t) {
  let s = `<defs>${grad('g1', '#d9d9d9', '#4e4e4e')}${grad('gr', '#fd2f29', '#482525')}${grad('gg', '#2df635', '#255728')}${grad('aud', '#f3f3e2', '#3a3a38')}${grad('aud2', '#e2e0d6', '#333331')}<linearGradient id="wav" x1="0" y1="0" x2="0" y2="1"><stop offset="0" stop-color="#adadad"/><stop offset=".5" stop-color="#e6e6e6"/><stop offset="1" stop-color="#b0b0b0"/></linearGradient></defs>`;
  const X = 2566;
  s += rc(527, 212, X, 306, '#8899b3') + rc(527, 306, X, 331, '#9a9a9a') + rc(527, 331, X, 341, '#dfe8bd') + rc(527, 341, X, 354, '#c3cac8') + rc(527, 354, X, 378, '#898989') + rc(527, 378, X, 402, '#919191') + rc(527, 402, X, 425, '#7c7c7c') + rc(527, 425, X, 449, '#8f8f8f');
  s += rc(527, 450, X, 1755, '#d8d8d8') + rc(527, 972, X, 1113, '#c2c9d6') + rc(527, 1113, X, 1448, '#b8bdc7');
  s += rc(bar(3), 856, bar(5), 972, '#b399cb') + rc(bar(3), 1113, bar(5), 1448, '#947fb8') + rc(bar(3), 1448, bar(5), 1755, '#a27fc6');
  [235, 258.500, 282, 305.700].forEach(y => s += `<path d="M527 ${y}H${X}" stroke="#ccd3de" stroke-width="2"/>`);
  [330.700, 354, 378, 401.700, 425, 449].forEach(y => s += `<path d="M527 ${y}H${X}" stroke="#383838" stroke-width="2"/>`);
  let ln = '';
  for (let n = 2; n <= 17; n++) ln += `M${bar(n)} 307V1755`;
  s += `<path d="${ln}" stroke="#2e2e2e" stroke-width="1.600"/>`;
  // ruler ticks and labels
  let tk = '', tx = '';
  const lab = (x, y, l) => tx += `<text x="${x}" y="${y}" font-size="14.500" fill="#e6e9ee" font-family="'DejaVu Sans Condensed','DejaVu Sans'">${l}</text>`;
  for (let i = 0; i < 34; i++) { const x = bar(1) + i * 61.275; const b = i % 5 === 0; if (x < X) { tk += `M${x} 235v-${b ? 12 : 6}M${x} 258v-${b ? 12 : 6}`; tk += `M${x} 305v-${i % 2 ? 11 : 23}M${x + 30.600} 305v-6`; } }
  for (let i = 0; i <= 6; i++) { const sec = String(i * 5).padStart(2, '0'); lab(bar(1) + 306.400 * i + 3, 228, '00:00:' + sec); lab(bar(1) + 306.400 * i + 3, 251, '00:00:' + sec + ':00'); }
  ['0', '319286', '638572', '957858', '1277144'].forEach((l, i) => { const x = bar(1) + 407.600 * i; lab(x + 3, 275, l); tk += `M${x} 281v-22`; });
  for (let n = 1; n <= 17; n++) lab(bar(n) + 3, 299, n);
  s += `<path d="${tk}" stroke="#dfe4ea" stroke-width="1.500"/>` + tx;
  // meter, tempo, markers
  const mk = (x, y, l) => `<text x="${x}" y="${y}" font-size="17.800" fill="#111">${l}</text>`;
  s += rc(527, 307, 571, 330, '#b97f7d') + rc(527, 332, 613, 353, '#d9a08c') + rc(527, 307, 530, 353, '#e05050') + mk(535, 326, '4/4') + mk(535, 349, '120,000');
  s += rc(651, 380, 718, 400, '#a8a8a8') + '<path d="M651 380l22 20h-22z" fill="#c8c8c8"/>' + mk(671, 397, 'Loop');
  s += rc(bar(3), 380, 850, 400, '#8f7fa4') + `<path d="M${bar(3)} 380h18l-10 20h-8z" fill="#a47fc6"/>` + mk(793, 397, 'Punch') + rc(940, 380, 1018, 400, '#8f7fa4') + '<path d="M996 380h22v20h-6z" fill="#a47fc6"/>' + mk(943, 397, 'Punch');
  s += rc(1561, 380, 1631, 400, '#a8a8a8') + '<path d="M1631 380v20h-22z" fill="#c8c8c8"/>' + mk(1564, 397, 'Loop');
  s += rc(651, 427, 709, 447, '#648472') + '<path d="M651 427l12 10-12 10z" fill="#3f7f5c"/>' + mk(663, 444, 'start') + rc(1580, 427, 1631, 447, '#648472') + '<path d="M1631 427l-10 10 10 10z" fill="#3f7f5c"/>' + mk(1584, 444, 'end');
  // tracks
  [697.500, 856, 971.500, 1112.500, 1200, 1322, 1448, 1556, 1663].forEach(y => s += `<path d="M527 ${y}H${X}" stroke="#1c1c1c" stroke-width="2"/>`);
  s += rc(651, 546, bar(6), 696, 'url(#g1)', `stroke="${t.selStroke}" stroke-width="2"`) + rc(bar(6) + 1, 545, bar(10), 697, 'url(#gr)') + rc(651, 697, bar(6), 856, 'url(#gg)') + rc(bar(6) + 1, 697, bar(10), 856, 'url(#gg)');
  s += rc(bar(3), 547, bar(5), 856, 'rgba(70,30,130,0.13)');
  let g2 = ''; for (let n = 3; n < 10; n++) g2 += `M${bar(n)} 546V856`;
  s += `<path d="${g2}" stroke="#000" stroke-opacity=".3" stroke-width="1.200"/>`;
  [0, 490].forEach(d => {
    s += note(651 + d, 670, 775 + d, 676.500, 'l') + note(795 + d, 643.500, 942 + d, 650, 'l') + note(935 + d, 599, 957 + d, 606, 'g') + note(1022 + d, 626, 1125 + d, 633, 'b');
    s += note(935 + d, 777, 957 + d, 789, 'g') + note(1022 + d, 817, 1125 + d, 828, 'b') + note(795 + d, 842, 942 + d, 853, 'l');
  });
  s += mk(674, 563, 'MIDI-1') + `<text x="1164" y="563" font-size="17.800" fill="#fff">MIDI-1.7</text>` + mk(674, 716, 'MIDI-1.5') + mk(1164, 716, 'MIDI-1.8');
  s += waves(649, 972, 1112, 1041);
  ['1.2', '1.4', '1.6', '1.7'].forEach((l, i) => s += mk(674 + i * 122.500, 990, 'Audio-' + l));
  s += '<path d="M531.500 212V1755" stroke="#2c4060" stroke-width="2"/><path d="M527 212h18l-13 16h-5z" fill="#26374f"/>';
  return `<svg class="h-full w-full" viewBox="527 212 2039 1543" preserveAspectRatio="none">${s}</svg>`;
}
function summary() {
  let s = rc(0, 0, 2308, 66, '#3e3e3e');
  for (let y = 4; y < 66; y += 13) s += rc(0, y, 2308, y + 5, '#4b4b4b') + rc(0, y + 6, 2308, y + 8, '#2c2c2c');
  s += rc(193, 0, 1153, 7, '#d8d8d8') + rc(1153, 0, 2115, 7, '#fb2420') + rc(193, 7, 2115, 14, '#1df520') + rc(193, 21, 1153, 28, '#f6f4e0');
  s += '<path d="M193 0v66M2115 0v66" stroke="#c8c820" stroke-width="2"/>';
  return svg(2308, 66, s);
}

function win(t, idx) {
  const wbtn = g => V(0, [[2, 28, bub(g, t.glyph)]]);
  const title = H(0, [[2, 28, wbtn(G.x)], [36, 62, wbtn(G.v)], [70, 96, wbtn(G.o)], [1400, 1697, txt('000 - Ardour', 'justify-center ' + t.title)], [2999, 3025, wbtn(G.uu)], [3032, 3058, wbtn(G.d)], [3066, 3093, V(0, [[3, 28, svg(27, 25, peak)]])]]);
  const menu = H(0, [['Session', 14, 86], ['Transport', 102, 184], ['Edit', 200, 234], ['Region', 250, 313], ['Track', 329, 375], ['View', 390, 436], ['Window', 452, 523], ['Help', 539, 593]].map(([l, a, b]) => [a, b, txt(l, t.menu)]));
  const st = [['File:', 1817], ['WAV 32-float', 1860, 1], ['TC:', 1989], ['30', 2023, 1], ['Audio:', 2058], ['48 kHz / 42,7 ms', 2121, 1], ['Buffers:', 2322], ['p:100% c:100%', 2399, 1], ['DSP:', 2607], ['3,0%', 2669, 1], ['X:', 2792], ['0', 2815, 1], ['Disk:', 2868], ['&gt;24 hrs', 2919, 1], [t.clock, 2998]];
  const status = H(1807, [...st.map(([l, a, g], i) => [a, i + 1 < st.length ? st[i + 1][1] : 3050, txt(l, g ? 'text-[#0b7a12]' : t.stat)]), [3055, 3085, `<div class="my-[5px] flex w-full items-center justify-center rounded-[6px] border-2 border-black bg-[#3d3d3d]"><span class="h-[16px] w-[14px] rounded-full border-[3px] border-black bg-[#f0c020]"></span></div>`]]);
  const dd = l => btn(`<span class="ml-[10px] mr-auto">${l}</span><span class="mr-[4px] text-[13px] text-[#9a9a9a]">▽</span>`);
  const combo = (l, on) => btn(`<span class="ml-[10px] mr-auto">${l}</span><span class="mr-[12px] h-[16px] w-[16px] rounded-full border-4 border-black ${on ? 'bg-[#ff9a1a]' : 'bg-[#4a2c00]'}"></span>`);
  const sum = `<div class="h-full w-full overflow-hidden rounded-[5px] bg-[#8899b3]">${svg(1440, 78, '<path d="M669 63h771" stroke="#a9b6c9" stroke-width="2"/><path d="M737 5h55v23h-55z" fill="#b6b473"/><path d="M737 5h12v8l-6 18-6-18z" fill="#eede3e"/><path d="M928 5h50v23h-50z" fill="#b6b473"/><path d="M928 5h12v8l-6 18-6-18z" fill="#eede3e"/><text x="748" y="24" font-size="17.800" fill="#111">start</text><text x="939" y="24" font-size="17.800" fill="#111">end</text>' + ['00', '14', '28', '42', '56'].map((l, i) => `<rect x="${666 + i * 167.800}" y="54" width="107" height="18" fill="#8899b3"/><text x="${668 + i * 167.800}" y="69" font-size="17" fill="#dfe3ea">00:00:${l}:00</text>`).join('') + '<path d="M717.500 5v70" stroke="#e02030" stroke-width="2.500"/>')}</div>`;
  const transport = H(0, [
    [7, 353, V(0, [[0, 34, H(7, [[7, 41, btn(I.panic)], [45, 77, btn(I.metro)], [81, 116, btn(I.start)], [120, 154.500, btn(I.end)], [158.500, 193, btn(I.loop)], [197, 232, btn(I.range)], [236, 271, btn(I.play)], [275, 310, btn(I.stop, 'lav')], [318, 353, btn(I.rec, 'rec')]])],
      [46, 74, H(7, [[7, 77, btn('Int.')], [84, 250, `<div class="relative flex w-full items-center"><div class="h-[6px] w-full rounded-full bg-[#7a7a7a]"></div><div class="absolute left-[73px] h-full w-[19px] rounded-[6px] border-2 border-black bg-[#137f13]"></div></div>`], [270, 345, txt('Stop', 'justify-center text-[#f6f6f6]')]])]])],
    [363, 365, sep],
    [373, 575, V(0, [[3, 33, H(373, [[373, 434, txt('Punch:', t.menu)], [436, 498, btn('In', 'purple')], [513, 575, btn('Out', 'purple')]])], [46, 76, H(373, [[383, 434, txt('Rec:', t.menu)], [436, 575, btn('Non-Layered')]])]])],
    [580.500, 582.500, sep],
    [589, 764, V(0, [[0, 34, combo('Follow Range', 1)], [43, 77, combo('Auto Return')]])],
    [772, 774, sep],
    [781.500, 1077.500, V(0, [[0, 35, '<div class="flex w-full items-center justify-center rounded-[6px] bg-[#3d3d3d] font-[\'DejaVu_Sans_Mono\',monospace] text-[28.800px] text-[#dcdcdc]">00:00:00:01</div>'], [46, 76, txt('INT/JACK', 'pl-[12px] text-[#f6f6f6] text-[17px]')]])],
    [1085, 1087, sep],
    [1094, 1390, V(0, [[0, 35, '<div class="flex w-full items-center justify-center rounded-[6px] bg-[#232323] font-[\'DejaVu_Sans_Mono\',monospace] text-[28.800px] text-[#dccb2f]">001|01|0152</div>'], [43, 77, H(0, [[0, 144, btn('♩ = 120,000')], [152, 296, btn('TS: 4/4')]])]])],
    [1399, 1401, sep],
    [1408, 1480, V(0, [[3, 20.500, btn('Solo', 'brown')], [30, 47.500, btn('Audition', 'brown')], [56.500, 74, btn('Feedback', 'brown')]])],
    [1490, 1492, sep],
    [1499, 2939, sum],
    [2944, 2962, '<div class="w-full bg-[#222] border border-black"></div>'], [2965, 2984, '<div class="w-full bg-[#222] border border-black"></div>'], [2989, 3003, '<div class="w-full rounded-[7px] bg-[#222] border border-black"></div>'],
    [3013, 3087, V(0, [[0, 34, btn('Editor')], [43, 77, btn('Mixer', 'mixer')]])],
  ]);
  const sp2 = '<div class="h-full w-full bg-[#222]"></div>';
  const tools = H(177, [[184.600, 299.400, dd('Lock')], [304, 380.500, btn('Smart')], [384.600, 418, btn(I.hand, 'lav')], [423, 458, btn(I.span)], [462, 497, btn(I.cut)], [500.500, 535, btn(I.stretch)], [539, 574, btn(I.audition)], [578, 613, btn(I.draw)], [617, 651.500, btn(I.edit)], [663, 665, sp2], [674, 709.600, btn(I.zout)], [713.700, 748, btn(I.zin)], [752, 787, btn(I.zfit)], [790.500, 946.700, dd('Mouse')], [958, 960, sp2], [969.700, 1047, dd('*')], [1050.700, 1085, btn(I.shrink)], [1089.600, 1124, btn(I.expand)], [1135, 1137, sp2], [1147, 1293, dd('Grid')], [1297.500, 1506, dd('Marks')], [1518, 1520, sp2], [1529.700, 1672.500, dd('Mouse')], [1684, 1686, sp2], [1695.500, 1731, btn(I.lt, 'nudge')], [1734, 1769.500, btn(I.gt, 'nudge')], [1773, 1919, '<div class="flex w-full items-center justify-center rounded-[6px] bg-[#666464] font-[\'DejaVu_Sans_Mono\',monospace] text-[17.600px] tracking-[0.600px] text-[#a3a2c6]">00:00:05:00</div>']]);

  const rulerLabels = ['Mins:Secs', 'Timecode', 'Samples', 'Bars:Beats', 'Meter', 'Tempo', 'Range Markers', 'Loop/Punch Ranges', 'CD Markers', 'Location Markers'];
  const headers = `<div class="flex h-full w-full flex-col"><div class="h-[333px] shrink-0 text-right text-[#7a7a7a]">${rulerLabels.map(l => `<div class="flex h-[23.700px] items-center justify-end pr-[8px]">${l}</div>`).join('')}<div class="mt-[34px] flex h-[24px] items-center justify-end pr-[8px]">Video Timeline</div></div><div class="flex w-full flex-col bg-[#c3c3c3] pl-[26px]">${TRACKS.map(k => track(t, k)).join('')}</div></div>`;

  const lock = c => `<svg width="18" height="20" viewBox="0 0 18 20"><path d="M5 9V6q0-4 4-4t4 4v3" fill="none" stroke="${c}" stroke-width="2.500"/><path d="M1 8h16v11H1z" fill="${c}"/></svg>`;
  const names = [['MIDI', 1, 1], ['MIDI-1.4', 2, 1], ['Audio+MIDI', 2, 1, 1], ['Audio', 0, 1], ['Bus 1'], ['Bus'], ['VCA 1'], ['VCA 2'], ['Master']];
  const cc = h => `<div class="flex w-full items-center justify-center">${h}</div>`;
  const listRows = names.map(([n, i, r, si]) => `<div class="h-[30px]">${H(2569, [[2580, 2721, txt(n, t.gtk)], [2722, 2770, cc(chk)], [2771, 2819, cc(chk)], [2820, 2852, cc(i ? `<span class="h-[20px] w-[18px] rounded-full ${i === 1 ? 'border-2 border-dotted border-[#bbb] bg-[#333]' : 'bg-[#dedede]'}"></span>` : '')], [2853, 2889, cc(r ? '<span class="h-[19px] w-[19px] rounded-full bg-[#452727]"></span>' : '')], [2889, 2925, cc(r ? lock('#400a0a') : '')], [2926, 2950, cc('<svg width="18" height="20" viewBox="0 0 18 20"><path d="M8 1h9v8l-8 10H1v-7z" fill="#3c3a10"/></svg>')], [2957, 2978, cc('<span class="h-[18px] w-[18px] bg-[#263f08]"></span>')], [2992, 3014, cc(`<span class="h-[18px] w-[18px] ${si ? 'bg-[#35f5a5]' : 'bg-[#0c3f2b]'}"></span>`)], [3027, 3050, cc(lock('#263f08'))]])}</div>`).join('');
  const clk = (v, g) => `<div class="flex h-full w-full items-center justify-center rounded-[6px] font-['DejaVu_Sans_Mono',monospace] text-[17.600px] tracking-[0.500px] ${g ? 'bg-[#444444] text-[#dd8410]' : 'bg-[#222222] text-[#c9c23c]'}">${v}</div>`;
  const clocks = `<div class="h-[91px] w-[528px] overflow-hidden rounded-[5px] bg-black">${V(212, [
    [217, 235, H(2568, [[2640, 2784, txt('Selection', 'justify-center ' + t.stat)], [2790, 2934, txt('Punch', 'justify-center ' + t.stat)]])],
    [235.500, 256, H(2568, [[2568, 2636, txt('Start', 'justify-end ' + t.stat)], [2640, 2784, clk('00:00:02:00', 1)], [2789, 2934, clk('00:00:04:00')]])],
    [256, 276.500, H(2568, [[2568, 2636, txt('End', 'justify-end ' + t.stat)], [2640, 2784, clk('00:00:09:29', 1)], [2789, 2934, clk('00:00:08:00')]])],
    [276.500, 297, H(2568, [[2568, 2636, txt('Length', 'justify-end ' + t.stat)], [2640, 2784, clk('00:00:08:00', 1)]])]])}</div>`;
  const hd = [['V', 2722, 2770], ['A', 2771, 2818], ['I', 2820, 2852], ['R', 2854, 2889], ['RS', 2889, 2925], ['M', 2926, 2949], ['S', 2950, 2985], ['SI', 2986, 3020], ['SS', 3021, 3056]];
  const list = `<div class="h-full w-full overflow-hidden border border-[#9a9a9a] bg-[#c4c4c4]"><div class="h-[34px] border-b-2 border-[#a8a8a8] bg-linear-to-b from-[#d9d9d9] to-[#e6e6e6]">${H(2569, [[2574, 2720, txt('Name', t.menu)], ...hd.map(([l, a, b]) => [a, b, `<div class="my-[6px] flex w-full items-center justify-center border-l-2 border-white ${t.menu}">${l}</div>`])])}</div>${listRows}</div>`;
  const tab = (l, a, b, on) => [a, b, `<div class="flex w-[33px] items-center justify-center rounded-r-[6px] border-2 border-[#a6a6a6] ${on ? 'bg-[#e8e8e8]' : 'bg-[#c9c9c9]'} ${t.tab}"><span class="[writing-mode:vertical-rl]">${l}</span></div>`];
  const tabs = V(303, [tab('Regions', 306, 391), tab('Tracks &amp; Busses', 393, 555, 1), tab('Snapshots', 556, 664), tab('Track &amp; Bus Groups', 666, 856), tab('Ranges &amp; Marks', 857, 1018)]);
  const side = V(212, [[212, 303, clocks], [303, 1829, H(2566, [[2569, 3057, list], [3057, 3096, tabs]])]]);
  const edit = V(212, [
    [212, 1755, H(177, [[177, 528, headers], [528, 2566, canvas(t)]])],
    [1758, 1829, H(177, [[178, 214, V(0, [[0, 35, gbtn(chev('l'))], [36, 71, gbtn(chev('r'))]])], [216.500, 2524.500, `<div class="pt-[3px]">${summary()}</div>`], [2528, 2564, V(0, [[0, 35, gbtn(chev('u'))], [36, 71, gbtn(chev('d'))]])]])],
  ]);
  return `<section class="relative h-[1830px] w-[3098px] shrink-0 bg-[#e0e0e0]">
    ${V(0, [
      [0, 31.500, `<header class="w-full border-t-2 border-[#9b9896] bg-[#d6d1ce]">${title}</header>`],
      [31.500, 69.500, H(0, [[0, 593, `<nav class="w-full border-b-2 border-[#bdbdbd] bg-linear-to-b from-[#e3e3e3] to-[#d9d9d9]">${menu}</nav>`], [1807, 3093, `<div class="w-full rounded-[9px] bg-[#262626]">${status}</div>`]])],
      [76, 154.500, transport],
      [162, 1830, H(0, [
        [0, 177, `<aside class="h-full w-full border-b-2 border-[#9c9c9c]">${strip(t, midiStrip)}</aside>`],
        [177, 3096, V(162, [[168, 202, tools], [212, 1829, H(177, [[177, 2566, edit], [2566, 3096, side]])]])]])],
    ])}
    ${mixer(t, idx)}
    <div class="pointer-events-none absolute inset-y-0 right-0 w-[2px] bg-[#9b9896]"></div>
  </section>`;
}

// ---------- "E"-mode panels ----------
function panel(t, k) {
  const L = n => 374.400 + (n - 1) * 122.500;
  let s = `<defs>${grad('pr' + k, `rgba(225,140,140,${k ? 0.35 : 0.22})`, `rgba(190,150,150,${k ? 0.12 : 0.06})`)}${grad('pg' + k, `rgba(150,225,160,${k ? 0.4 : 0.24})`, `rgba(120,170,110,${k ? 0.2 : 0.12})`)}</defs>`;
  const ys = [0, 15.300, 29.900, 44, 58.200, 72.400, 86.500, 100.700, 115.200, 131.300, 145.500, 160, 173.800, 187.500, 202, 216.300, 230.800, 247.600];
  const dk = [1, 3, 5, 8, 10, 13, 15];
  for (let i = 0; i < 17; i++) s += rc(375, ys[i], 1600, ys[i + 1], dk.includes(i) ? '#c6c6c6' : '#dadada') + `<path d="M375 ${ys[i + 1]}H1600" stroke="#b9b9b9" stroke-width="1.500"/>`;
  s += rc(375, 248, 1600, 408, '#d9d9d9') + rc(375, 408, 1600, 549, '#c2c9d6');
  s += rc(L(3), 0, L(5), 247, 'rgba(155,100,195,0.5)') + rc(L(3), 249, L(5), 407, 'rgba(125,95,185,0.52)');
  s += rc(L(2), 0, L(10), 247, `url(#pr${k})`) + rc(L(2), 249, L(10), 407, `url(#pg${k})`);
  s += '<path d="M375 248H1600M375 408H1600M375 548H1600M378 0V549" stroke="#3f4650" stroke-width="2"/>';
  let g = ''; for (let n = 2; n <= 10; n++) g += `M${L(n)} 0V549`;
  s += `<path d="${g}" stroke="#4a4a4a" stroke-width="1.500"/>`;
  const nt = (x, y, x2, y2, c) => rc(x, y, x2, y2, { l: 'rgba(165,165,212,.9)', b: '#8f8fb8', g: '#43e35c' }[c], `stroke="${c === 'g' ? '#16852a' : '#606088'}" stroke-width="2"`);
  [0, 490].forEach(d => {
    s += nt(782 + d, 89, 804 + d, 102, 'g') + nt(869 + d, 132, 973 + d, 146, 'b') + nt(642 + d, 161, 791 + d, 174.500, 'l') + nt(498 + d, 204, 624 + d, 217, 'l');
    s += nt(782 + d, 328, 804 + d, 340.500, 'g') + nt(869 + d, 368, 973 + d, 380, 'b') + nt(642 + d, 393, 791 + d, 405, 'l');
  });
  const tx = (x, y, l, c = '#111') => `<text x="${x}" y="${y}" font-size="17.800" fill="${c}">${l}</text>`;
  s += tx(521, 19, 'MIDI-1', '#f4f0f0') + tx(1011, 19, 'MIDI-1.7', '#f4f0f0') + tx(521, 267, 'MIDI-1.5') + tx(1011, 267, 'MIDI-1.8');
  s += waves(497, 408, 548, 477);
  ['1.2', '1.4', '1.6', '1.7'].forEach((l, i) => s += tx(521 + i * 122.500, 426, 'Audio-' + l));
  [440, 476, 434, 498].forEach((y, i) => { const a = 499 + i * 122.500; s += `<path d="M${a} ${y}h119" stroke="#8fae92" stroke-width="2.500"/><path d="M${a - 2} ${y - 5}h5v10h-5zM${a + 115} ${y - 5}h5v10h-5z" fill="none" stroke="#ee1111" stroke-width="1.800"/>`; });
  // piano keys and scroller
  s += rc(322, 1, 342, 247, '#3a3a3a'); for (let y = 4; y < 246; y += 4) s += `<path d="M323 ${y}h18" stroke="#555"/>`;
  s += rc(323, 109, 341, 140, '#d8d8d8', 'stroke="#fff"') + '<path d="M326 114h12M326 119h12M326 132h14M326 136h14" stroke="#111" stroke-width="2"/>';
  s += rc(343, 1, 375, 247, '#d3d3c8'); [19, 47, 76, 119, 148, 191, 219].forEach(y => s += rc(343, y, 364, y + 15, '#2a2a2a') + `<path d="M364 ${y + 7}h11" stroke="#333" stroke-width="1.500"/>`);
  s += '<path d="M343 5h32M343 105h32M343 177h32M374 0v247" stroke="#222" stroke-width="2"/><text x="345" y="174" font-size="11" fill="#777">C4</text>';
  const hs = [{ name: 'MIDI', h: 248, fill: 161, m: 3, w: 375, mx: 318 }, { name: 'MIDI-1.4', h: 160, fill: 86, m: 3, w: 375, mx: 318 }, { name: 'Audio', h: 141, kind: 'audio', fill: 153, m: 1, w: 375, mx: 368 }];
  return `<section class="relative flex h-[549px] w-[1600px] shrink-0 overflow-hidden"><div class="flex flex-col">${hs.map(h => track(t, h)).join('')}</div><svg class="absolute inset-0" width="1600" height="549" viewBox="0 0 1600 549">${s}</svg></section>`;
}

// ---------- review notes drawn over the windows ----------
function notes() {
  const box = (a, b, c, d) => `<rect x="${a + 3}" y="${b + 3}" width="${c - a - 6}" height="${d - b - 6}" fill="#fff" stroke="#00f" stroke-width="6"/>`;
  const tx = (a, b, y, l) => `<text x="${a}" y="${y}" textLength="${b - a}" lengthAdjust="spacingAndGlyphs" word-spacing="14" xml:space="preserve">${l}</text>`;
  const sm = (a, b, y) => `<path d="M${a + 4} ${y}H${b - 4}" stroke-width="9"/><path d="M${b - 2} ${y}l-26 -10l6 10l-6 10z" stroke-width="5" fill="#00f"/>`;
  const r = (x, y, dx = 52, dy = 14) => `M${x - dx} ${y - dy}L${x} ${y}L${x - dx} ${y + dy}`;
  const lines = 'M465 813V658H1282M452 757L465 712L480 760M2968 657H3498V811M3484 758L3498 809L3512 758'
    + 'M344 918H1284' + r(1048, 918) + 'M344 1089H401V918M2955 926H3530' + r(3532, 926)
    + 'M713 940H653V1154H1286M639 996L653 1045L667 996M2846 1145H3716V916H3804' + r(3807, 916)
    + 'M1680 1494H2931' + r(1862, 1494) + 'M3972 1497H4681' + r(4683, 1497)
    + 'M195.500 331V1408H457V1615M318 1495H457M345 1615H1130' + r(898, 1615) + 'M2646 1620H3365' + r(3367, 1620)
    + 'M514 1691H792' + r(693, 1691) + 'M3260 1695H3449' + r(3451, 1695)
    + 'M2515 2364H2766' + r(2649, 2364) + 'M4062 2364H4203' + r(4205, 2364);
  return `<svg class="absolute inset-0" width="6316" height="2817" viewBox="0 0 6316 2817" fill="none" stroke-linecap="round" stroke-linejoin="round">
    <path d="${lines}" stroke="#00f" stroke-width="7"/>
    ${box(1279, 605, 2970, 711)}${box(1279, 734, 2957, 997)}${box(1283, 1094, 2848, 1197)}${box(2929, 1441, 3974, 1546)}${box(1128, 1549, 2648, 1654)}${box(790, 1649, 3262, 1754)}${box(2764, 2264, 4064, 2407)}
    <g fill="#000" font-family="Roboto,sans-serif" font-weight="300" font-size="70">
    ${tx(1307, 1605, 681, '1. Red frame')}${tx(1720, 2940, 681, 'to Violet (more harmoniously with general design)')}
    ${tx(1307, 2915, 808, '2. Fill of selected track is almost the same with unselected midi.')}${tx(1304, 1700, 888, 'So we change it')}${tx(1937, 2143, 888, 'to Violet')}${tx(1304, 2626, 968, '(more noticeable &amp; harmoniously with general design)')}
    ${tx(1297, 1706, 1168, '3.  Brown frame')}${tx(1804, 2822, 1168, 'to blue (more harmoniously &amp; noticeable)')}
    ${tx(2952, 3212, 1515, '4. Gtk text')}${tx(3322, 3948, 1515, 'more dark (more readble)')}
    ${tx(1153, 1884, 1624, '5. Menu text, track name text')}${tx(1997, 2620, 1624, 'more dark (more readble)')}
    ${tx(827, 1443, 1722, '6. Header of a bus-track')}${tx(1554, 3223, 1722, 'lighter (closer to light-theme conception, more readable text name)')}
    ${tx(2776, 4046, 2377, '7.  Less transparency of midi regions in “E”-mode')}
    </g>
    <g stroke="#00f">${sm(1618, 1704, 661)}${sm(1808, 1900, 866)}${sm(1712, 1797, 1148)}${sm(3228, 3312, 1497)}${sm(1903, 1986, 1604)}${sm(1459, 1542, 1700)}${sm(3388, 3468, 2296)}</g>
    <text x="2634" y="166" textLength="1678" lengthAdjust="spacingAndGlyphs" font-family="Roboto,sans-serif" font-weight="200" font-size="170" fill="#fff">Blueberry_Milk_corrections</text>
    <rect x="4" y="4" width="6308" height="2809" rx="6" stroke="#000" stroke-width="8"/>
  </svg>`;
}
document.getElementById('root').innerHTML = `<main class="flex flex-col pt-[270px]"><div class="flex pl-[61px]">${win(T[0], 0)}${win(T[1], 1)}</div><div class="mt-[94px] flex pl-[1555px]">${panel(T[0], 0)}${panel(T[1], 1)}</div></main>${notes()}`;
</script>
</body>
</html>
